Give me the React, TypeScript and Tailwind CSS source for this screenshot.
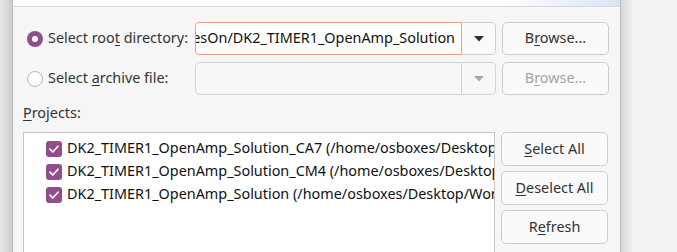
import React from "react";

const projects = [
  "DK2_TIMER1_OpenAmp_Solution_CA7 (/home/osboxes/Desktop/Workspace/DK2_TIMER1_OpenAmp_Solution/CA7)",
  "DK2_TIMER1_OpenAmp_Solution_CM4 (/home/osboxes/Desktop/Workspace/DK2_TIMER1_OpenAmp_Solution/CM4)",
  "DK2_TIMER1_OpenAmp_Solution (/home/osboxes/Desktop/Workspace/DK2_TIMER1_OpenAmp_Solution)",
];

function Arrow({ disabled }: { disabled?: boolean }) {
  return (
    <svg width="10" height="6" viewBox="0 0 10 6">
      <path d="M0 0 L10 0 L5 5.5 Z" fill={disabled ? "#a8a8a8" : "#2e2e2e"} />
    </svg>
  );
}

function Button({ children, disabled }: { children: React.ReactNode; disabled?: boolean }) {
  return (
    <div
      className={`w-[107px] flex items-center justify-center rounded-[5px] border border-[#cdcdcd] bg-[#fafafa] ${
        disabled ? "text-[#a3a3a3]" : "text-[#323232]"
      }`}
    >
      {children}
    </div>
  );
}

function Check() {
  return (
    <div className="w-[16px] h-[16px] rounded-[3px] bg-[#924d8b] flex items-center justify-center shrink-0">
      <svg width="12" height="12" viewBox="0 0 12 12">
        <path d="M2 6.2 L4.8 9 L10 3.2" stroke="white" strokeWidth="1.7" fill="none" strokeLinecap="round" strokeLinejoin="round" />
      </svg>
    </div>
  );
}

export default function App() {
  return (
    <div
      className="w-[677px] h-[252px] flex overflow-hidden text-[14.4px] leading-none"
      style={{ fontFamily: "'Noto Sans', 'Open Sans', sans-serif" }}
    >
      <div className="w-[12px] bg-gradient-to-r from-[#e8e8e8] to-[#cdcdcd] border-r border-[#b9b9b9] box-content" />

      <div className="w-[607px] flex flex-col bg-[#f6f6f6] border-r border-[#bdbdbd] box-content">
        <div className="h-[7px] shrink-0 bg-gradient-to-r from-white via-white via-80% to-[#dbe3f4] border-b border-[#d9d9d9]" />

        <div className="flex flex-col pl-[10px] pr-[11px] pt-[15px]">
          <div className="flex h-[33px]">
            <div className="w-[172px] flex items-center text-[#333] whitespace-nowrap">
              <div className="ml-[4px] mr-[5px] w-[16px] h-[16px] rounded-full bg-[#924d8b] flex items-center justify-center shrink-0">
                <div className="w-[6px] h-[6px] rounded-full bg-white" />
              </div>
              <span>
                Select roo<u className="underline-offset-2">t</u> directory:
              </span>
            </div>
            <div className="w-[267px] flex items-center justify-end overflow-hidden whitespace-nowrap bg-white border border-[#ee9f88] rounded-l-[4px] px-[6px] text-[#111]">
              <span>/home/osboxes/Desktop/WorkspacesOn/DK2_TIMER1_OpenAmp_Solution</span>
            </div>
            <div className="w-[34px] flex items-center justify-center bg-[#fafafa] border border-l-0 border-[#cdcdcd] rounded-r-[5px]">
              <Arrow />
            </div>
            <div className="ml-[6px] flex">
              <Button>
                <span>
                  B<u className="underline-offset-2">r</u>owse...
                </span>
              </Button>
            </div>
          </div>

          <div className="flex h-[33px] mt-[7px]">
            <div className="w-[172px] flex items-center text-[#333] whitespace-nowrap">
              <div className="ml-[4px] mr-[5px] w-[16px] h-[16px] rounded-full bg-white border border-[#b4b4b4] shrink-0" />
              <span>
                Select <u className="underline-offset-2">a</u>rchive file:
              </span>
            </div>
            <div className="w-[267px] bg-[#f7f7f7] border border-[#d3d3d3] rounded-l-[5px]" />
            <div className="w-[34px] flex items-center justify-center bg-[#f7f7f7] border border-l-0 border-[#d3d3d3] rounded-r-[5px]">
              <Arrow disabled />
            </div>
            <div className="ml-[6px] flex">
              <Button disabled>
                <span>
                  B<u className="underline-offset-2">r</u>owse...
                </span>
              </Button>
            </div>
          </div>

          <div className="h-[37px] text-[#333] flex items-center">
            <span>
              <u className="underline-offset-2">P</u>rojects:
            </span>
          </div>

          <div className="flex">
            <div className="w-[472px] h-[130px] bg-white border border-[#c6c6c6] overflow-hidden pt-[4px] pl-[22px]">
              {projects.map((p) => (
                <div key={p} className="h-[23px] flex items-center whitespace-nowrap text-[#111]">
                  <Check />
                  <span className="ml-[5px]">{p}</span>
                </div>
              ))}
            </div>
            <div className="ml-[6px] flex flex-col gap-[5px]">
              <div className="h-[34px] flex">
                <Button>
                  <span>
                    <u className="underline-offset-2">S</u>elect All
                  </span>
                </Button>
              </div>
              <div className="h-[34px] flex">
                <Button>
                  <span>
                    <u className="underline-offset-2">D</u>eselect All
                  </span>
                </Button>
              </div>
              <div className="h-[34px] flex">
                <Button>
                  <span>
                    R<u className="underline-offset-2">e</u>fresh
                  </span>
                </Button>
              </div>
            </div>
          </div>
        </div>
      </div>

      <div className="flex-1 bg-[#f3f2f1]">
        <div className="w-[12px] h-full bg-gradient-to-r from-[#d9d8d7] to-[#f3f2f1]" />
      </div>
    </div>
  );
}
